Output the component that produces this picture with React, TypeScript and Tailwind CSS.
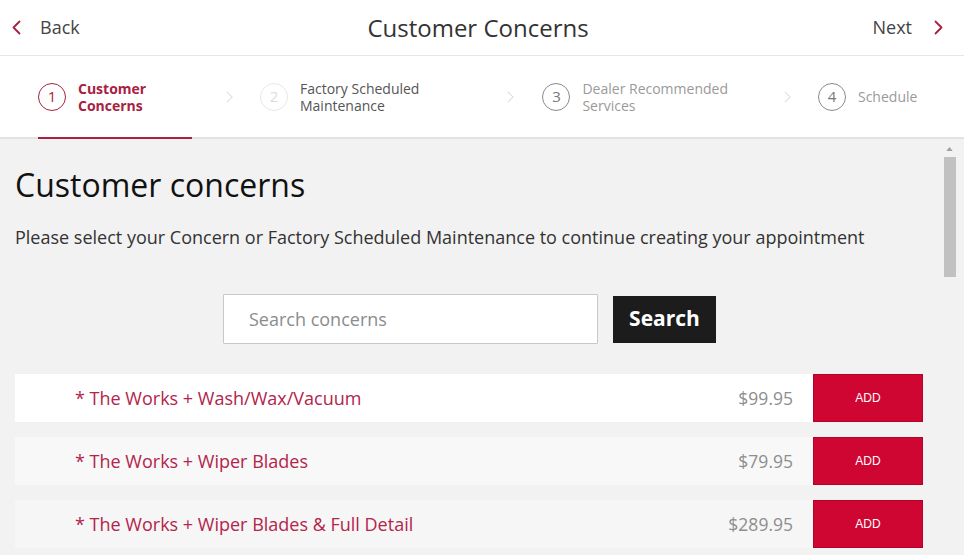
import React from 'react';

const Chevron = ({ dir, className }: { dir: 'left' | 'right'; className?: string }) => (
  <svg viewBox="0 0 12 20" className={className} fill="none" stroke="currentColor" strokeWidth="2.4" strokeLinecap="round" strokeLinejoin="round">
    {dir === 'left' ? <path d="M10 2 L2 10 L10 18" /> : <path d="M2 2 L10 10 L2 18" />}
  </svg>
);

const StepArrow = () => (
  <svg viewBox="0 0 8 14" className="w-[7px] h-[12px] text-[#dcdcdc]" fill="none" stroke="currentColor" strokeWidth="1.2">
    <path d="M1 1 L7 7 L1 13" />
  </svg>
);

interface Step {
  num: number;
  label: string[];
  circle: string;
  text: string;
}

const steps: Step[] = [
  { num: 1, label: ['Customer', 'Concerns'], circle: 'border-[#a8213f] text-[#a8213f]', text: 'text-[#a8213f] font-bold' },
  { num: 2, label: ['Factory Scheduled', 'Maintenance'], circle: 'border-[#e8e8e8] text-[#dcdcdc]', text: 'text-[#555]' },
  { num: 3, label: ['Dealer Recommended', 'Services'], circle: 'border-[#8a8a8a] text-[#777]', text: 'text-[#9a9a9a]' },
  { num: 4, label: ['Schedule'], circle: 'border-[#8a8a8a] text-[#777]', text: 'text-[#9a9a9a]' },
];

// spacing around the little arrows between steps
const arrowGaps = ['ml-[34px] mr-[27px]', 'ml-[88px] mr-[28px]', 'ml-[56px] mr-[27px]'];

const concerns = [
  { name: '* The Works + Wash/Wax/Vacuum', price: '$99.95', bg: 'bg-white' },
  { name: '* The Works + Wiper Blades', price: '$79.95', bg: 'bg-[#f8f8f8]' },
  { name: '* The Works + Wiper Blades & Full Detail', price: '$289.95', bg: 'bg-[#f6f6f6]' },
];

export default function App() {
  return (
    <div className="w-[964px] h-[555px] overflow-hidden bg-[#f2f2f2] flex flex-col" style={{ fontFamily: '"Open Sans", "Liberation Sans", sans-serif' }}>
      {/* Top bar */}
      <div className="h-[56px] bg-white border-b border-[#e6e6e6] flex items-center px-[12px] shrink-0">
        <div className="flex items-center w-[200px]">
          <Chevron dir="left" className="w-[9px] h-[15px] text-[#a8213f]" />
          <span className="ml-[19px] text-[18px] text-[#444]">Back</span>
        </div>
        <div className="flex-1 text-center text-[24px] text-[#333]">Customer Concerns</div>
        <div className="flex items-center justify-end w-[208px] pr-[9px]">
          <span className="text-[18px] text-[#444]">Next</span>
          <Chevron dir="right" className="ml-[22px] w-[9px] h-[15px] text-[#a8213f]" />
        </div>
      </div>

      {/* Stepper */}
      <div className="h-[83px] bg-white border-b-2 border-[#e2e2e2] flex items-stretch shrink-0 pl-[38px]">
        {steps.map((s, i) => (
          <React.Fragment key={s.num}>
            <div className={`relative flex items-center ${i === 0 ? 'w-[154px]' : ''}`}>
              <div className={`w-[28px] h-[28px] rounded-full border-[1.5px] flex items-center justify-center text-[15px] ${s.circle}`}>{s.num}</div>
              <div className={`ml-[12px] text-[14px] leading-[17px] ${s.text} ${i === 0 ? 'text-[13.5px]' : ''}`}>
                {s.label.map((l) => (
                  <div key={l}>{l}</div>
                ))}
              </div>
              {i === 0 && <div className="absolute left-0 right-0 bottom-[-2px] h-[2px] bg-[#a8213f]" />}
            </div>
            {i < steps.length - 1 && (
              <div className={`flex items-center ${arrowGaps[i]}`}>
                <StepArrow />
              </div>
            )}
          </React.Fragment>
        ))}
      </div>

      {/* Content */}
      <div className="flex-1 flex min-h-0">
        <div className="flex-1 pl-[15px] pr-[15px]">
          <h1 className="mt-[27px] text-[32px] leading-[38px] text-[#111]">Customer concerns</h1>
          <p className="mt-[20px] text-[18px] leading-[26px] text-[#333] whitespace-nowrap">
            Please select your Concern or Factory Scheduled Maintenance to continue creating your appointment
          </p>
          <div className="mt-[44px] flex items-center pl-[208px]">
            <div className="w-[375px] h-[50px] bg-white border border-[#c8c8c8] rounded-[1px] flex items-center pl-[25px] text-[18px] text-[#8c8c8c]">
              Search concerns
            </div>
            <button className="ml-[15px] w-[103px] h-[47px] bg-[#1c1c1c] text-white font-bold text-[21px]">Search</button>
          </div>
          <div className="mt-[30px] flex flex-col gap-[15px] w-[908px]">
            {concerns.map((c) => (
              <div key={c.name} className={`h-[48px] flex items-center ${c.bg}`}>
                <span className="pl-[60px] flex-1 text-[18px] text-[#b3244b]">{c.name}</span>
                <span className="text-[17.5px] text-[#8e8e8e] mr-[20px]">{c.price}</span>
                <button
                  className="w-[110px] h-[48px] bg-[#cf0632] text-white text-[12px] border border-[#b50229]"
                  style={{ fontFamily: '"Liberation Sans", Arial, sans-serif' }}
                >
                  ADD
                </button>
              </div>
            ))}
          </div>
        </div>
        {/* Scrollbar */}
        <div className="w-[24px] pt-[8px] flex flex-col items-center pr-[5px]">
          <svg viewBox="0 0 8 5" className="w-[7px] h-[4px] text-[#a0a0a0]">
            <path d="M0 5 L4 0 L8 5 Z" fill="currentColor" />
          </svg>
          <div className="mt-[6px] w-[12px] h-[120px] bg-[#c1c1c1]" />
        </div>
      </div>
    </div>
  );
}
